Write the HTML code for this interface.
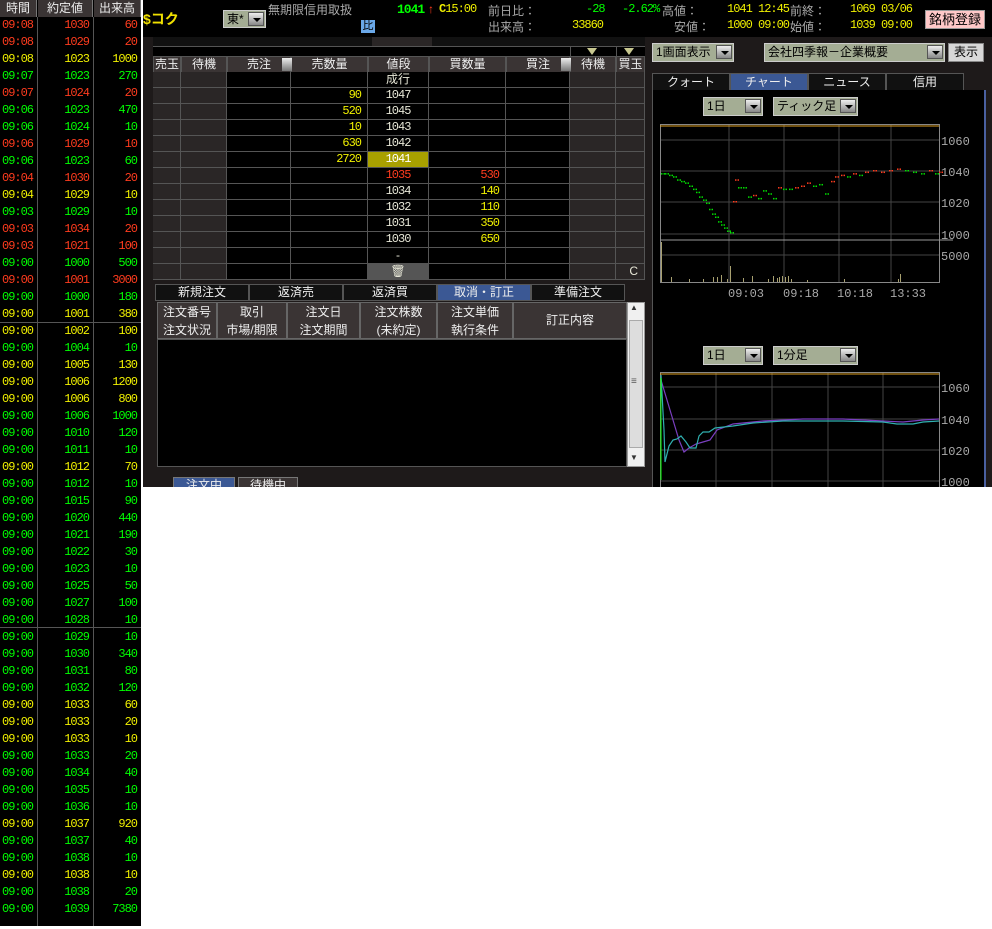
<!DOCTYPE html>
<html><head><meta charset="utf-8"><style>
*{margin:0;padding:0;box-sizing:border-box}
body{width:992px;height:929px;background:#fff;position:relative;overflow:hidden;font-family:"Liberation Sans","Noto Sans CJK JP",sans-serif;font-size:12px;color:#ddd}
.a{position:absolute;white-space:nowrap}
.m{font-family:"Liberation Mono",monospace;font-size:12px;letter-spacing:-1px}
#L{position:absolute;left:0;top:0;width:141px;height:926px;background:#000}
#L .h{position:absolute;top:0;height:17px;background:#3a3434;color:#eee;text-align:center;line-height:17px;font-size:12px;border-right:1px solid #777}
#L .r{position:absolute;left:0;width:141px;height:17px;line-height:17px;font-family:"Liberation Mono",monospace;font-size:12px;letter-spacing:-1px}
#L .r span{position:absolute;top:0}
.R{color:#ff3c1e}.Y{color:#f0f000}.G{color:#00ff00}
#M{position:absolute;left:143px;top:0;width:849px;height:487px;background:#000;overflow:hidden}
.cell{position:absolute;border-right:1px solid #555;border-bottom:1px solid #555}
.dd{position:absolute;background:#a4ad94;color:#000;border:1px solid #ccc;line-height:16px;padding-left:3px;font-size:12px}
.dd i{position:absolute;right:1px;top:1px;width:16px;height:14px;background:linear-gradient(#eee,#888);border:1px solid #555}
.dd i:after{content:"";position:absolute;left:4px;top:5px;border-left:4px solid transparent;border-right:4px solid transparent;border-top:4px solid #000}
.tab{position:absolute;background:#111;border:1px solid #555;color:#eee;text-align:center;font-size:12px}
.tab.s{background:#3b5894}
.th{position:absolute;background:#3a3434;border:1px solid #666;color:#eee;text-align:center;font-size:12px;line-height:18px}
</style></head><body>

<div id="L">
<div class="h" style="left:0;width:37px">時間</div>
<div class="h" style="left:38px;width:55px">約定値</div>
<div class="h" style="left:94px;width:47px">出来高</div>
<div style="position:absolute;left:37px;top:17px;width:1px;height:909px;background:#555"></div>
<div style="position:absolute;left:93px;top:17px;width:1px;height:909px;background:#555"></div>
<div style="position:absolute;left:0;top:322px;width:141px;height:1px;background:#555"></div>
<div style="position:absolute;left:0;top:627px;width:141px;height:1px;background:#555"></div>
<div id="rows"></div>
</div>

<div id="M">
<div class="a" style="left:0;top:9px;color:#f0e000;font-size:14px;font-weight:bold">$コク</div>
<div class="dd" style="left:80px;top:10px;width:43px;height:18px">東*<i></i></div>
<div class="a" style="left:125px;top:1px;color:#aaa">無期限信用取扱</div>
<div class="a" style="left:218px;top:20px;width:14px;height:13px;background:#6aa8e8;color:#000;font-size:11px;line-height:13px;text-align:center">比</div>
<div class="a m" style="left:254px;top:2px;color:#00ff00;font-weight:bold;font-size:13px">1041</div>
<div class="a" style="left:285px;top:2px;color:#ff3c1e">↑</div>
<div class="a m" style="left:296px;top:2px;color:#f0f000"><b>C</b>15:00</div>
<div class="a" style="left:345px;top:2px;color:#aaa">前日比：</div>
<div class="a m" style="left:443px;top:2px;color:#00ff00">-28</div>
<div class="a m" style="left:479px;top:2px;color:#00ff00">-2.62%</div>
<div class="a" style="left:345px;top:18px;color:#aaa">出来高：</div>
<div class="a m" style="left:429px;top:18px;color:#f0f000">33860</div>
<div class="a" style="left:519px;top:2px;color:#aaa">高値：</div>
<div class="a" style="left:519px;top:18px;color:#aaa">　安値：</div>
<div class="a m" style="left:584px;top:2px;color:#f0f000">1041 12:45</div>
<div class="a m" style="left:584px;top:18px;color:#f0f000">1000 09:00</div>
<div class="a" style="left:647px;top:2px;color:#aaa">前終：</div>
<div class="a" style="left:647px;top:18px;color:#aaa">始値：</div>
<div class="a m" style="left:707px;top:2px;color:#f0f000">1069 03/06</div>
<div class="a m" style="left:707px;top:18px;color:#f0f000">1039 09:00</div>
<div class="a" style="left:782px;top:10px;width:60px;height:19px;background:#ffc8c8;border:1px solid #999;color:#000;text-align:center;line-height:17px;font-size:13px">銘柄登録</div>

<div class="a" style="left:0;top:37px;width:506px;height:450px;background:#1e1a1a"></div>
<div class="a" style="left:10px;top:37px;width:492px;height:9px;background:#111"></div>
<div class="a" style="left:229px;top:37px;width:60px;height:9px;background:#2a2626"></div>
<div class="a" style="left:10px;top:46px;width:492px;height:10px;background:#000;border-top:1px solid #555"></div>
<div class="a" style="left:427px;top:46px;width:1px;height:10px;background:#555"></div>
<div class="a" style="left:473px;top:46px;width:1px;height:10px;background:#555"></div>
<div class="a" style="left:444px;top:48px;border-left:5px solid transparent;border-right:5px solid transparent;border-top:7px solid #c8c890"></div>
<div class="a" style="left:481px;top:48px;border-left:5px solid transparent;border-right:5px solid transparent;border-top:7px solid #c8c890"></div>
<div id="book"></div>

<div id="tabs"></div>
<div id="ths"></div>
<div class="a" style="left:14px;top:339px;width:470px;height:128px;background:#000;border:1px solid #555"></div>
<div class="a" style="left:484px;top:302px;width:18px;height:165px;background:#f0f0f0;border:1px solid #999"></div>
<div class="a" style="left:486px;top:320px;width:14px;height:128px;background:#ddd;border:1px solid #aaa"></div>
<div class="a" style="left:487px;top:303px;color:#333;font-size:8px">▲</div>
<div class="a" style="left:487px;top:453px;color:#333;font-size:8px">▼</div>
<div class="a" style="left:488px;top:376px;color:#555;font-size:10px">≡</div>
<div class="a" style="left:30px;top:477px;width:62px;height:14px;background:#3b5894;border:1px solid #777;color:#eee;text-align:center;font-size:12px;line-height:14px">注文中</div>
<div class="a" style="left:95px;top:477px;width:60px;height:14px;background:#3a3434;border:1px solid #777;color:#eee;text-align:center;font-size:12px;line-height:14px">待機中</div>

<div class="a" style="left:502px;top:37px;width:347px;height:450px;background:#1e1a1a"></div>
<div class="dd" style="left:509px;top:43px;width:82px;height:19px">1画面表示<i></i></div>
<div class="dd" style="left:621px;top:43px;width:181px;height:19px">会社四季報－企業概要<i></i></div>
<div class="a" style="left:805px;top:43px;width:36px;height:19px;background:#d8d8d8;border:1px solid #888;color:#000;text-align:center;line-height:17px">表示</div>
<div class="tab" style="left:509px;top:73px;width:78px;height:18px;line-height:16px">クォート</div>
<div class="tab s" style="left:587px;top:73px;width:78px;height:18px;line-height:16px">チャート</div>
<div class="tab" style="left:665px;top:73px;width:78px;height:18px;line-height:16px">ニュース</div>
<div class="tab" style="left:743px;top:73px;width:78px;height:18px;line-height:16px">信用</div>
<div class="a" style="left:509px;top:90px;width:332px;height:397px;background:#000;border-left:1px solid #555"></div>
<div class="a" style="left:841px;top:90px;width:2px;height:397px;background:#4a60a0"></div>
<div class="dd" style="left:560px;top:97px;width:60px;height:19px">1日<i></i></div>
<div class="dd" style="left:630px;top:97px;width:85px;height:19px">ティック足<i></i></div>
<div class="dd" style="left:560px;top:346px;width:60px;height:19px">1日<i></i></div>
<div class="dd" style="left:630px;top:346px;width:85px;height:19px">1分足<i></i></div>
<svg class="a" style="left:0;top:0" width="849" height="487">
<g stroke="#444" stroke-width="1" fill="none">
<line x1="517" y1="140" x2="796" y2="140"/><line x1="517" y1="171" x2="796" y2="171"/><line x1="517" y1="202" x2="796" y2="202"/><line x1="517" y1="234" x2="796" y2="234"/>
<line x1="517" y1="255" x2="796" y2="255"/>
<line x1="586" y1="124" x2="586" y2="282"/><line x1="641" y1="124" x2="641" y2="282"/><line x1="696" y1="124" x2="696" y2="282"/><line x1="748" y1="124" x2="748" y2="282"/>
<line x1="517" y1="387" x2="796" y2="387"/><line x1="517" y1="419" x2="796" y2="419"/><line x1="517" y1="450" x2="796" y2="450"/><line x1="517" y1="481" x2="796" y2="481"/>
<line x1="573" y1="372" x2="573" y2="487"/><line x1="629" y1="372" x2="629" y2="487"/><line x1="685" y1="372" x2="685" y2="487"/><line x1="740" y1="372" x2="740" y2="487"/>
</g>
<rect x="517.5" y="124.5" width="279" height="158" fill="none" stroke="#888"/>
<line x1="517" y1="240" x2="810" y2="240" stroke="#999"/>
<line x1="517" y1="126" x2="796" y2="126" stroke="#e0a020"/>
<rect x="517.5" y="372.5" width="279" height="120" fill="none" stroke="#888"/>
<line x1="517" y1="374" x2="796" y2="374" stroke="#e0a020"/>
<g fill="#aaa" font-size="12" font-family="Liberation Mono,monospace">
<text x="798" y="145">1060</text><text x="798" y="176">1040</text><text x="798" y="207">1020</text><text x="798" y="239">1000</text><text x="798" y="260">5000</text>
<text x="585" y="297">09:03</text><text x="640" y="297">09:18</text><text x="694" y="297">10:18</text><text x="747" y="297">13:33</text>
<text x="798" y="392">1060</text><text x="798" y="424">1040</text><text x="798" y="455">1020</text><text x="798" y="486">1000</text>
</g>
<g id="dots"></g>
<g fill="#a8a070" id="vol"></g>
<polyline fill="none" stroke="#7a3fc0" stroke-width="1.2" points="518,380 524,400 530,420 536,440 541,452 546,448 553,444 560,442 567,440 574,430 590,424 620,421 660,419 700,419 740,421 760,422 780,420 796,419"/>
<polyline fill="none" stroke="#30b0b0" stroke-width="1.2" points="518,375 521,430 522,462 526,446 530,440 534,439 538,436 543,442 547,448 553,448 556,436 560,432 566,432 572,428 590,426 610,423 640,421 700,421 740,422 754,424 770,424 780,422 796,421"/>
<line x1="518" y1="378" x2="518" y2="480" stroke="#00ff00"/>
</svg>
</div>

<script>
var D=[["09:08","1030","60","R"],["09:08","1029","20","R"],["09:08","1023","1000","Y"],["09:07","1023","270","G"],["09:07","1024","20","R"],["09:06","1023","470","G"],["09:06","1024","10","G"],["09:06","1029","10","R"],["09:06","1023","60","G"],["09:04","1030","20","R"],["09:04","1029","10","Y"],["09:03","1029","10","G"],["09:03","1034","20","R"],["09:03","1021","100","R"],["09:00","1000","500","G"],["09:00","1001","3000","R"],["09:00","1000","180","G"],["09:00","1001","380","Y"],["09:00","1002","100","Y"],["09:00","1004","10","G"],["09:00","1005","130","Y"],["09:00","1006","1200","Y"],["09:00","1006","800","Y"],["09:00","1006","1000","G"],["09:00","1010","120","G"],["09:00","1011","10","G"],["09:00","1012","70","Y"],["09:00","1012","10","G"],["09:00","1015","90","G"],["09:00","1020","440","G"],["09:00","1021","190","G"],["09:00","1022","30","G"],["09:00","1023","10","G"],["09:00","1025","50","G"],["09:00","1027","100","G"],["09:00","1028","10","G"],["09:00","1029","10","G"],["09:00","1030","340","G"],["09:00","1031","80","G"],["09:00","1032","120","G"],["09:00","1033","60","Y"],["09:00","1033","20","Y"],["09:00","1033","10","Y"],["09:00","1033","20","G"],["09:00","1034","40","G"],["09:00","1035","10","G"],["09:00","1036","10","G"],["09:00","1037","920","Y"],["09:00","1037","40","G"],["09:00","1038","10","G"],["09:00","1038","10","Y"],["09:00","1038","20","G"],["09:00","1039","7380","G"]];
var h="";D.forEach(function(d,i){h+='<div class="r '+d[3]+'" style="top:'+(17+i*17)+'px"><span style="left:2px">'+d[0]+'</span><span style="right:52px">'+d[1]+'</span><span style="right:4px">'+d[2]+'</span></div>'});
document.getElementById("rows").innerHTML=h;
var cols=[[10,38],[38,84],[84,148],[148,225],[225,286],[286,363],[363,427],[427,473],[473,502]];
var hd=["売玉","待機","売注","売数量","値段","買数量","買注","待機","買玉"];
var b="";
cols.forEach(function(c,i){b+='<div class="th" style="left:'+c[0]+'px;top:56px;width:'+(c[1]-c[0])+'px;height:17px;line-height:15px;border-color:#555">'+hd[i]+'</div>';});
b+='<div class="a" style="left:139px;top:58px;width:10px;height:13px;background:linear-gradient(#eee,#777)"></div><div class="a" style="left:418px;top:58px;width:10px;height:13px;background:linear-gradient(#eee,#777)"></div>';
var rows=[["","成行","",""],["90","1047","",""],["520","1045","",""],["10","1043","",""],["630","1042","",""],["2720","1041","",""],["","1035","530","r"],["","1034","140",""],["","1032","110",""],["","1031","350",""],["","1030","650",""],["","-","",""],["","🗑","",""]];
rows.forEach(function(r,i){var y=72+i*16;
cols.forEach(function(c,j){var bg=(j<2||j>6)?"#2a2626":"#000";if(j==4&&i==5)bg="#a8a000";if(j==4&&i==12)bg="#555";
var t="",col="#e8e8d8",al="center",ex="font-family:Liberation Sans,Noto Sans CJK JP,sans-serif;font-size:12px";
if(j==3){t=r[0];col="#f0f000";al="right"}if(j==4){t=r[1];if(r[3])col="#ff3c1e";if(i==5)col="#fff"}if(j==5){t=r[2];col=r[3]?"#ff3c1e":"#f0f000";al="right"}
if(/^[0-9]+$/.test(t)){ex="font-family:Liberation Mono,monospace;font-size:12px;letter-spacing:-1px"}
if(j==8&&i==12){t="C";al="right"}
b+='<div class="cell" style="left:'+c[0]+'px;top:'+y+'px;width:'+(c[1]-c[0])+'px;height:16px;background:'+bg+';color:'+col+';text-align:'+al+';line-height:15px;padding:0 6px;'+ex+'">'+t+'</div>';});});
document.getElementById("book").innerHTML=b;
var tb="",tn=["新規注文","返済売","返済買","取消・訂正","準備注文"];
tn.forEach(function(t,i){tb+='<div class="tab'+(i==3?' s':'')+'" style="left:'+(12+i*94)+'px;top:284px;width:94px;height:17px;line-height:15px">'+t+'</div>'});
document.getElementById("tabs").innerHTML=tb;
var tc=[[14,74],[74,144],[144,217],[217,294],[294,370],[370,484]],tt=["注文番号<br>注文状況","取引<br>市場/期限","注文日<br>注文期間","注文株数<br>(未約定)","注文単価<br>執行条件","訂正内容"];
var th="";tc.forEach(function(c,i){th+='<div class="th" style="left:'+c[0]+'px;top:302px;width:'+(c[1]-c[0])+'px;height:37px;'+(i==5?'line-height:35px':'')+'">'+tt[i]+'</div>'});
document.getElementById("ths").innerHTML=th;
var P=function(v){return 171-(v-1040)*1.55};
var pts=[[518,1038,"g"],[522,1038,"g"],[526,1037,"g"],[530,1036,"g"],[534,1034,"g"],[538,1033,"g"],[542,1032,"g"],[546,1030,"g"],[550,1028,"g"],[553,1026,"g"],[556,1023,"g"],[560,1021,"g"],[563,1019,"g"],[566,1015,"g"],[569,1012,"g"],[572,1010,"g"],[575,1007,"g"],[578,1005,"g"],[581,1003,"g"],[584,1001,"g"],[587,1000,"g"],[590,1020,"r"],[592,1034,"r"],[595,1029,"g"],[600,1029,"g"],[605,1023,"g"],[610,1024,"r"],[615,1022,"g"],[620,1027,"g"],[625,1025,"g"],[630,1022,"g"],[635,1029,"r"],[640,1028,"g"],[646,1028,"g"],[652,1029,"r"],[658,1030,"r"],[664,1032,"r"],[670,1030,"g"],[676,1031,"g"],[682,1025,"g"],[688,1033,"r"],[692,1036,"r"],[698,1037,"r"],[704,1036,"g"],[710,1038,"r"],[716,1037,"g"],[722,1039,"r"],[730,1040,"r"],[738,1039,"r"],[746,1040,"r"],[754,1041,"r"],[762,1040,"g"],[770,1039,"g"],[778,1038,"g"],[786,1040,"r"],[792,1038,"g"],[796,1039,"r"]];
var s="";pts.forEach(function(p){var c=p[2]=="g"?"#00e000":"#ff3c1e";s+='<rect x="'+p[0]+'" y="'+(P(p[1])-1)+'" width="1.5" height="1.5" fill="'+c+'"/><rect x="'+(p[0]+2.5)+'" y="'+(P(p[1])-1)+'" width="1.5" height="1.5" fill="'+c+'"/>';});
document.getElementById("dots").innerHTML=s;
var v=[[518,40],[528,5],[546,3],[560,3],[570,5],[574,5],[578,7],[584,3],[587,16],[600,4],[609,6],[625,3],[630,6],[634,4],[636,5],[639,6],[642,5],[645,6],[648,3],[664,2],[701,3],[755,3],[757,8]];
var vs="";v.forEach(function(q){vs+='<rect x="'+q[0]+'" y="'+(282-q[1])+'" width="1" height="'+q[1]+'"/>'});
document.getElementById("vol").innerHTML=vs;
</script>
</body></html>
